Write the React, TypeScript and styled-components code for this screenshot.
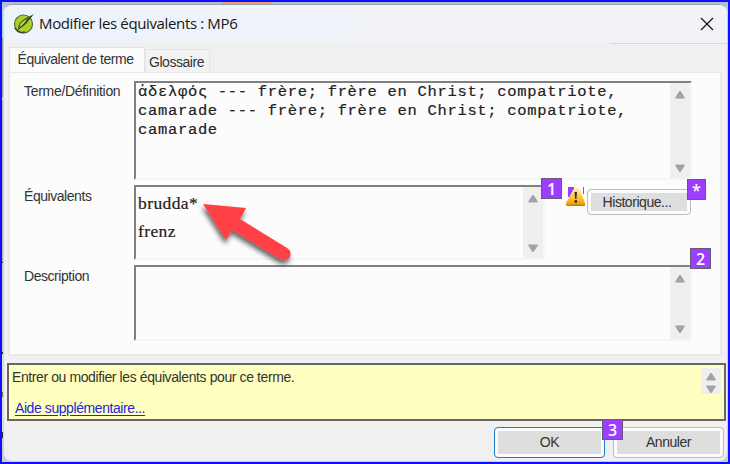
import React from "react";
import styled, { createGlobalStyle } from "styled-components";

const Global = createGlobalStyle`
  * { box-sizing: border-box; }
  body { margin: 0; background: #e6e6e6; overflow: hidden; }
`;

const Screen = styled.main`
  position: relative;
  width: 730px;
  height: 464px;
  padding: 2px 0 0 1px;
  border: 2px solid #0f0fff;
  background: linear-gradient(90deg, #b3bdd0 0 95px, #a9b2c4 95px 96px, #b3bdd0 96px 220px, #e8a16e 220px 270px, #b3bdd0 270px) 0 0 / 100% 3px no-repeat,
    linear-gradient(#acd0d8 0 36px, #999 36px 95px, #ddd 95px 98px, #b5b5b5 98px 260px, #222 260px 261px, #c9c9c9 261px 350px, #222 350px 352px, #ddd 352px 390px, #9c6944 390px 395px, #ddd 395px 430px, #333 430px 436px, #ccc 436px);
  font-family: "Liberation Sans", Arial, sans-serif;
`;

const Dialog = styled.section`
  display: flex;
  flex-direction: column;
  width: 725px;
  height: 458px;
  border: 1px solid #9da0a9;
  border-left-color: #d2d4d8;
  border-right-color: #ccc;
  border-bottom-color: #ccc;
  border-radius: 9px;
  background: #f0f0f0;
  overflow: hidden;
`;

const TitleBar = styled.header`
  display: flex;
  flex: none;
  align-items: center;
  height: 38px;
  padding: 0 13px 0 9px;
  background: linear-gradient(90deg, #edf3fb, #f0f2f8 50%, #f0f2f8);
`;

const Title = styled.h1`
  flex: 1;
  margin: 0 0 2px 4px;
  color: #171717;
  font: 400 15px/20px "Open Sans", "Noto Sans", sans-serif;
  letter-spacing: -0.36px;
`;

const Rule = styled.div`
  flex: none;
  align-self: flex-end;
  width: 116px;
  height: 1px;
  background: #d4d6d9;
`;

const Label = styled.span<{ $spacing?: number }>`
  font-size: 14px;
  line-height: 16px;
  letter-spacing: ${(p) => p.$spacing ?? -0.45}px;
  color: #333;
  white-space: nowrap;
`;

const Tabs = styled.nav`
  display: flex;
  flex: none;
  align-items: flex-end;
  height: 28px;
  padding-left: 5px;
`;

const Tab = styled.div<{ $active?: boolean }>`
  display: flex;
  justify-content: center;
  width: ${(p) => (p.$active ? 136 : 65)}px;
  height: ${(p) => (p.$active ? 25 : 23)}px;
  padding: ${(p) => (p.$active ? "3px 3px 0 0" : "4px 2px 0 0")};
  border: 1px solid #e4e4e4;
  border-bottom: 0;
  background: ${(p) => (p.$active ? "#fcfcfc" : "#f3f3f3")};
`;

const Panel = styled.div`
  display: flex;
  flex: none;
  flex-direction: column;
  gap: 5px;
  width: 714px;
  height: 284px;
  margin-left: 4px;
  padding: 8px 0 0 15px;
  border: 2px solid #e9e9e9;
  border-top-width: 1px;
  background: #fcfcfc;
`;

const FieldRow = styled.div<{ $height: number }>`
  display: grid;
  grid-template-columns: 109px auto 1fr;
  height: ${(p) => p.$height}px;
`;

const LabelCell = styled.div<{ $top?: number }>`
  padding-top: ${(p) => p.$top ?? 2}px;
  margin-left: -1px;
`;

const Field = styled.div<{ $width: number }>`
  display: flex;
  width: ${(p) => p.$width}px;
  height: 100%;
  border: 2px solid #808080;
  border-right-color: #f7f7f7;
  border-bottom-color: #f5f5f5;
  background: #fcfcfc;
`;

const Definition = styled.div`
  flex: 1;
  padding: 0 0 0 2px;
  font: 400 15.5px/19px "Liberation Mono", "DejaVu Sans Mono", monospace;
  letter-spacing: 0.68px;
  color: #222;
  white-space: pre;
  -webkit-text-stroke: 0.2px #222;
`;

const Words = styled.div`
  flex: 1;
  padding: 2px 0 0 2px;
  font: 400 17.5px/28px "Liberation Serif", "Times New Roman", serif;
  letter-spacing: 0.4px;
  color: #222;
  -webkit-text-stroke: 0.2px #222;
`;

const Scroll = styled.div<{ $compact?: boolean }>`
  display: flex;
  flex: none;
  flex-direction: column;
  align-items: center;
  justify-content: space-between;
  width: 20px;
  height: ${(p) => (p.$compact ? "26px" : "auto")};
  padding: ${(p) => (p.$compact ? "4px 0 0" : "7px 0 5px")};
  background: #efefef;
`;

const ArrowSvg = styled.svg`
  display: block;
  flex: none;
`;

const Actions = styled.div`
  display: flex;
  align-items: flex-start;
  padding: 2px 0 0 20px;
`;

const Button = styled.button<{ $primary?: boolean; $small?: boolean }>`
  flex: none;
  width: ${(p) => (p.$small ? 104 : 111)}px;
  height: ${(p) => (p.$small ? 26 : 31)}px;
  margin-top: ${(p) => (p.$small ? 2 : 0)}px;
  padding: ${(p) => (p.$small ? "0 4px 1px 0" : "0 0 1px")};
  border: ${(p) => (p.$primary ? "1.5px solid #167fd5" : "1px solid #bdbdbd")};
  border-radius: 4px;
  background: #dedede;
  box-shadow: inset 0 0 0 3px #fcfcfc;
  font-family: inherit;
`;

const Help = styled.aside`
  display: flex;
  flex: none;
  justify-content: space-between;
  width: 719px;
  height: 58px;
  margin: 7px 0 0 3px;
  padding: 3px 3px 0 3px;
  border: 2px solid #666;
  background: #ffffbf;
`;

const HelpText = styled.div`
  display: flex;
  flex-direction: column;
  align-items: flex-start;
  gap: 15px;
  padding-top: 1px;
`;

const Link = styled.a`
  margin-left: 3px;
  color: #2727d9;
  font-size: 14px;
  line-height: 16px;
  letter-spacing: -0.42px;
  text-decoration: underline;
  text-underline-offset: 2px;
`;

const Footer = styled.footer`
  display: flex;
  justify-content: flex-end;
  gap: 8px;
  padding: 6px 3px 0 0;
`;

const Badge = styled.span<{ $x: number; $y: number; $narrow?: boolean }>`
  position: absolute;
  left: ${(p) => p.$x}px;
  top: ${(p) => p.$y}px;
  width: ${(p) => (p.$narrow ? 19 : 21)}px;
  height: 21px;
  border: 1px solid #655b72;
  background: #9c3dff;
  color: #fff;
  font: 600 16px/21px "Open Sans", "Noto Sans", sans-serif;
  text-align: center;
`;

const Pointer = styled.svg`
  position: absolute;
  left: 196px;
  top: 195px;
`;

function Arrow({ down }: { down?: boolean }) {
  return (
    <ArrowSvg width="12" height="9" viewBox="0 0 12 9">
      <path d={down ? "M1.5 1h9l-4 6.5h-1z" : "M1.5 8h9l-4-6.5h-1z"} fill="#a3a3a3" stroke="#a3a3a3" strokeLinejoin="round" />
    </ArrowSvg>
  );
}

function ScrollBar({ compact }: { compact?: boolean }) {
  return <Scroll $compact={compact}><Arrow /><Arrow down /></Scroll>;
}

function Logo() {
  return (
    <svg width="22" height="22" viewBox="0 0 22 22">
      <circle cx="10.5" cy="11" r="9" fill="#acd12c" stroke="#526b26" strokeWidth="1.2" />
      <path d="M2 15Q5 21 12 19" fill="none" stroke="#404532" strokeWidth="1.5" />
      <path d="M5 16Q5 9 13 5L21 1L16 7Q13 13 5 16Z" fill="#495538" />
      <path d="M6.5 14Q7 9 14 6Q11 12 6.5 14Z" fill="#b9d631" />
      <path d="M4 18L19 3" stroke="#343d30" strokeWidth="1" />
    </svg>
  );
}

function Warning() {
  return (
    <svg width="22" height="22" viewBox="0 0 22 22">
      <defs><linearGradient id="warning" x2="0" y2="1"><stop stopColor="#fff1b5" /><stop offset=".65" stopColor="#ffbd20" /><stop offset="1" stopColor="#e29100" /></linearGradient></defs>
      <path d="M3 0h6v10H3zM18 0h1v7h-1z" fill="#9c3dff" />
      <path d="M8 3Q11-2 15 3L20 16Q21 18 19 19H3Q0 19 1 16Z" fill="url(#warning)" />
      <path d="M2 18.3H20" fill="none" stroke="#b97a16" />
      <path d="M9.5 5h2.5l-.6 7h-1.2z" fill="#352c1b" />
      <circle cx="10.8" cy="14.5" r="1.4" fill="#352c1b" />
    </svg>
  );
}

export default function App() {
  return (
    <Screen>
      <Global />
      <Dialog>
        <TitleBar>
          <Logo />
          <Title>Modifier les équivalents : MP6</Title>
          <svg width="14" height="14" viewBox="0 0 14 14"><path d="M1 1l12 12M13 1L1 13" stroke="#111" strokeWidth="1.2" /></svg>
        </TitleBar>
        <Rule />
        <Tabs>
          <Tab $active><Label>Équivalent de terme</Label></Tab>
          <Tab><Label>Glossaire</Label></Tab>
        </Tabs>
        <Panel>
          <FieldRow $height={99}>
            <LabelCell $top={1}><Label $spacing={-0.3}>Terme/Définition</Label></LabelCell>
            <Field $width={558}>
              <Definition>{"ἀδελφός --- frère; frère en Christ; compatriote,\ncamarade --- frère; frère en Christ; compatriote,\ncamarade"}</Definition>
              <ScrollBar />
            </Field>
          </FieldRow>
          <FieldRow $height={75}>
            <LabelCell><Label>Équivalents</Label></LabelCell>
            <Field $width={411}>
              <Words><div>brudda*</div><div>frenz</div></Words>
              <ScrollBar />
            </Field>
            <Actions><Warning /><Button $small><Label>Historique...</Label></Button></Actions>
          </FieldRow>
          <FieldRow $height={76}>
            <LabelCell><Label>Description</Label></LabelCell>
            <Field $width={558}><Definition /><ScrollBar /></Field>
          </FieldRow>
        </Panel>
        <Help>
          <HelpText>
            <Label $spacing={-0.4}>Entrer ou modifier les équivalents pour ce terme.</Label>
            <Link>Aide supplémentaire...</Link>
          </HelpText>
          <ScrollBar compact />
        </Help>
        <Footer><Button $primary><Label>OK</Label></Button><Button><Label>Annuler</Label></Button></Footer>
      </Dialog>
      <Badge $x={539} $y={176}>1</Badge>
      <Badge $x={685} $y={177} $narrow>*</Badge>
      <Badge $x={688} $y={246}>2</Badge>
      <Badge $x={600} $y={417}>3</Badge>
      <Pointer width="105" height="80" viewBox="0 0 105 80">
        <defs><filter id="shadow" x="-20%" y="-20%" width="140%" height="150%"><feDropShadow dx="-1" dy="4" stdDeviation="2.5" floodOpacity=".6" /></filter></defs>
        <path d="M5 7L48 11L42 22L89 51Q94 54 92 60Q88 65 82 62L34 33L28 43Z" fill="#ff4144" filter="url(#shadow)" />
      </Pointer>
    </Screen>
  );
}
